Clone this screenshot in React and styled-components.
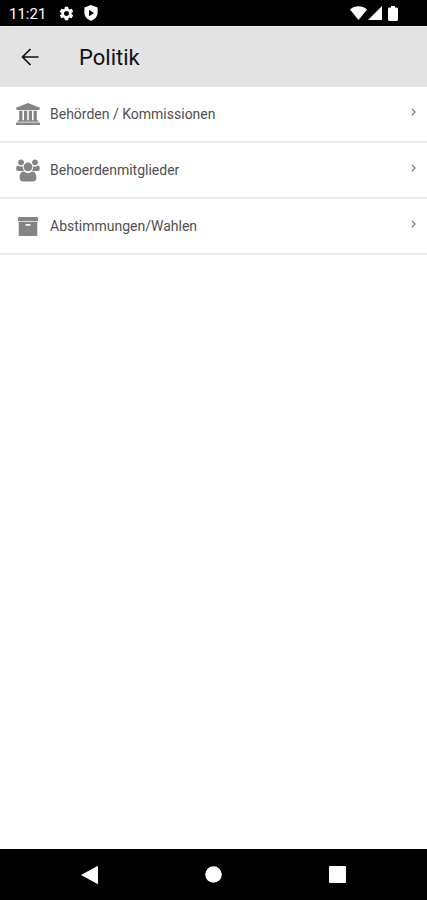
import styled, { createGlobalStyle } from 'styled-components';
import { MdSettings } from 'react-icons/md';

const entries = [
  { label: 'Behörden / Kommissionen', Icon: BankIcon },
  { label: 'Behoerdenmitglieder', Icon: GroupIcon },
  { label: 'Abstimmungen/Wahlen', Icon: ArchiveIcon },
];

function BankIcon() {
  return (
    <svg width="24" height="22" viewBox="0 0 24 22" fill="currentColor" aria-hidden="true">
      <path d="M12 0 24 4.8V6.4H22.4Q22.3 7.2 21.5 7.2H2.5Q1.7 7.2 1.6 6.4H0V4.8Z" />
      <path d="M3.2 8h3.2v9.2H8V8h3.2v9.2h1.6V8H16v9.2h1.6V8h3.2v9.2h.7q.9 0 .9.8v.8H1.6V18q0-.8.9-.8h.7Z" />
      <path d="M.9 19.6h22.2q.9 0 .9.8V22H0v-1.6q0-.8.9-.8Z" />
    </svg>
  );
}

function GroupIcon() {
  return (
    <svg width="24" height="23" viewBox="0 0 24 23" fill="currentColor" aria-hidden="true">
      <circle cx="5" cy="3.3" r="2.9" />
      <circle cx="19" cy="3.3" r="2.9" />
      <circle cx="12" cy="7.8" r="4.4" />
      <path d="M6.8 7.6C6.7 9.6 7.4 11 8.2 12H2.4C.8 12 .2 11.2.2 10 .2 8.2.6 6.6 1.8 6.6c.5 0 1.5 1 3.1 1 .7 0 1.3-.1 1.9-.3Z" />
      <path d="M17.2 7.6c.1 2-.6 3.4-1.4 4.4h5.8c1.6 0 2.2-.8 2.2-2 0-1.8-.4-3.4-1.6-3.4-.5 0-1.5 1-3.1 1-.7 0-1.3-.1-1.9-.3Z" />
      <path d="M7.8 12.6c.5 0 2 1.6 4.2 1.6s3.7-1.6 4.2-1.6c3.2 0 4.2 3 4.2 6.5 0 2.2-1.4 3.5-3.5 3.5H7.1c-2.1 0-3.5-1.3-3.5-3.5 0-3.5 1-6.5 4.2-6.5Z" />
    </svg>
  );
}

function ArchiveIcon() {
  return (
    <svg width="20" height="19" viewBox="0 0 20 19" fill="currentColor" aria-hidden="true">
      <path d="M.8 0h18.4q.8 0 .8.8v3.4H0V.8Q0 0 .8 0Z" />
      <path
        fillRule="evenodd"
        d="M.7 5H19.3V18q0 .9-.9.9H1.6q-.9 0-.9-.9ZM8.2 7q-.8 0-.8.9t.8.9h3.6q.8 0 .8-.9t-.8-.9Z"
      />
    </svg>
  );
}

function ShieldIcon() {
  return (
    <svg width="14" height="16" viewBox="0 0 14 16" aria-hidden="true">
      <path fill="#fff" d="M7 0 13.6 2.5V7.5C13.6 11.5 10.8 14.6 7 15.8 3.2 14.6.4 11.5.4 7.5V2.5Z" />
      <path fill="#000" d="M5 4.8 10 8 5 11.2Z" />
    </svg>
  );
}

function App() {
  return (
    <>
      <GlobalStyle />
      <Screen>
        <StatusBar>
          <Clock>11:21</Clock>
          <StatusIcons>
            <MdSettings size={17} aria-hidden="true" />
            <ShieldIcon />
          </StatusIcons>
          <SignalIcons>
            <svg width="17" height="14" viewBox="0 0 17 14" fill="currentColor" aria-hidden="true">
              <path d="M8.5 14 0 3.4C4.8-.9 12.2-.9 17 3.4Z" />
            </svg>
            <svg width="14" height="14" viewBox="0 0 14 14" fill="currentColor" aria-hidden="true">
              <path d="M14 0V14H0Z" />
            </svg>
            <Battery width="10" height="15" viewBox="0 0 10 15" fill="currentColor" aria-hidden="true">
              <path d="M3 0h4v1.4h1.5Q10 1.4 10 3v10.5q0 1.5-1.5 1.5h-7Q0 15 0 13.5V3Q0 1.4 1.5 1.4H3Z" />
            </Battery>
          </SignalIcons>
        </StatusBar>

        <Header>
          <BackButton type="button" aria-label="Zurück">
            <svg width="24" height="24" viewBox="0 0 24 24" fill="none" stroke="currentColor" strokeWidth="1.7">
              <path d="M20.5 12H5M12.5 4 4.5 12 12.5 20" />
            </svg>
          </BackButton>
          <Title>Politik</Title>
        </Header>

        <List>
          {entries.map(({ label, Icon }) => (
            <li key={label}>
              <Row href="#">
                <IconBox>
                  <Icon />
                </IconBox>
                <Label>{label}</Label>
                <Chevron width="5" height="8" viewBox="0 0 5 8" aria-hidden="true">
                  <path d="M.8.6 4.2 4 .8 7.4" fill="none" stroke="currentColor" strokeWidth="1.2" />
                </Chevron>
              </Row>
            </li>
          ))}
        </List>

        <NavBar>
          <NavButton type="button" aria-label="Zurück">
            <svg width="17" height="20" viewBox="0 0 17 20" fill="currentColor">
              <path d="M17 .8V19.2L0 10Z" />
            </svg>
          </NavButton>
          <NavButton type="button" aria-label="Startseite">
            <svg width="17" height="17" viewBox="0 0 17 17" fill="currentColor">
              <circle cx="8.5" cy="8.5" r="8.3" />
            </svg>
          </NavButton>
          <NavButton type="button" aria-label="Übersicht">
            <svg width="17" height="17" viewBox="0 0 17 17" fill="currentColor">
              <rect width="17" height="17" rx="1" />
            </svg>
          </NavButton>
        </NavBar>
      </Screen>
    </>
  );
}

const GlobalStyle = createGlobalStyle`
  * {
    box-sizing: border-box;
  }

  body {
    margin: 0;
    background: #fff;
    font-family: Roboto, sans-serif;
  }
`;

const Screen = styled.div`
  display: flex;
  flex-direction: column;
  min-height: 100vh;
`;

const StatusBar = styled.div`
  display: flex;
  align-items: center;
  height: 26px;
  padding: 0 29px 0 9px;
  background: #000;
  color: #fff;
`;

const Clock = styled.span`
  padding-top: 2px;
  font-size: 15px;
  line-height: 24px;
`;

const StatusIcons = styled.div`
  display: flex;
  align-items: center;
  gap: 9px;
  margin-left: 12px;
`;

const SignalIcons = styled.div`
  display: flex;
  align-items: center;
  gap: 1px;
  margin-left: auto;
`;

const Battery = styled.svg`
  margin-left: 5px;
`;

const Header = styled.header`
  display: flex;
  align-items: center;
  height: 61px;
  padding: 0 18px;
  border-top: 1px solid #ececec;
  background: #e3e3e3;
  color: #111;
`;

const BackButton = styled.button`
  display: flex;
  padding: 0;
  border: none;
  background: none;
  color: inherit;
  cursor: pointer;
`;

const Title = styled.h1`
  margin: 2px 0 0 37px;
  font-size: 22px;
  font-weight: 400;
  line-height: 28px;
`;

const List = styled.ul`
  flex: 1;
  margin: 0;
  padding: 0;
  list-style: none;
`;

const Row = styled.a`
  display: flex;
  align-items: center;
  height: 56px;
  padding: 0 11px 0 16px;
  border-bottom: 2px solid #ececec;
  color: #505050;
  text-decoration: none;
`;

const IconBox = styled.span`
  display: flex;
  justify-content: center;
  width: 24px;
  margin-right: 10px;
  color: #848484;
`;

const Label = styled.span`
  flex: 1;
  font-size: 14px;
  line-height: 20px;
`;

const Chevron = styled.svg`
  margin-bottom: 4px;
  color: #777;
`;

const NavBar = styled.nav`
  display: flex;
  justify-content: center;
  height: 51px;
  background: #000;
`;

const NavButton = styled.button`
  display: flex;
  align-items: center;
  justify-content: center;
  width: 29%;
  padding: 0;
  border: none;
  background: none;
  color: #fff;
  cursor: pointer;
`;

export default App;
